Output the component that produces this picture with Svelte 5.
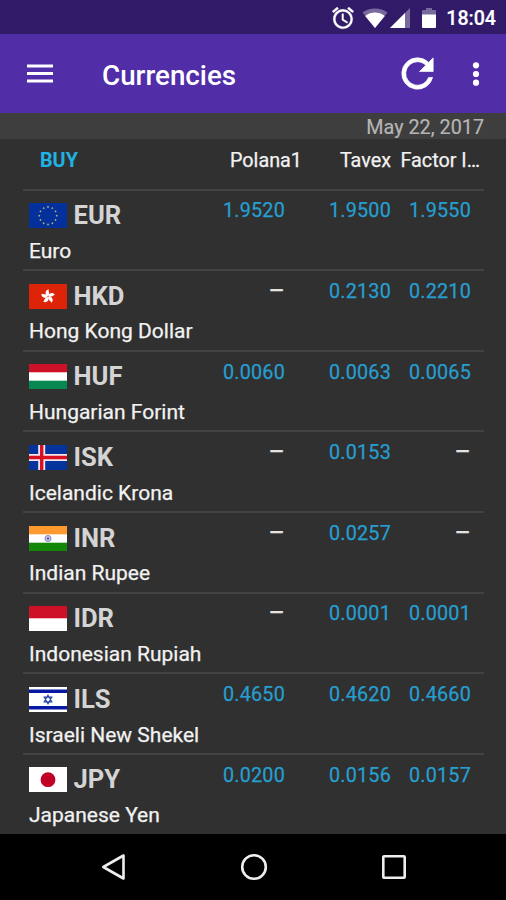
<script lang="ts">
  // Currency list: buy rates per exchange office. A null rate means
  // the office does not trade that currency.

  interface Currency {
    code: string;
    name: string;
    rates: (string | null)[];
  }

  const offices = ['Polana1', 'Tavex', 'Factor I…'];

  const currencies: Currency[] = [
    { code: 'EUR', name: 'Euro', rates: ['1.9520', '1.9500', '1.9550'] },
    { code: 'HKD', name: 'Hong Kong Dollar', rates: [null, '0.2130', '0.2210'] },
    { code: 'HUF', name: 'Hungarian Forint', rates: ['0.0060', '0.0063', '0.0065'] },
    { code: 'ISK', name: 'Icelandic Krona', rates: [null, '0.0153', null] },
    { code: 'INR', name: 'Indian Rupee', rates: [null, '0.0257', null] },
    { code: 'IDR', name: 'Indonesian Rupiah', rates: [null, '0.0001', '0.0001'] },
    { code: 'ILS', name: 'Israeli New Shekel', rates: ['0.4650', '0.4620', '0.4660'] },
    { code: 'JPY', name: 'Japanese Yen', rates: ['0.0200', '0.0156', '0.0157'] },
  ];

  const around = (n: number) => Array.from({ length: n }, (_, i) => (i * 360) / n);
</script>

{#snippet flag(code: string)}
  <svg class="flag" viewBox="0 0 38 25" preserveAspectRatio="none">
    {#if code === 'EUR'}
      <rect width="38" height="25" fill="#03309b" />
      {#each around(12) as deg}
        <circle cx="19" cy="4" r="0.9" fill="#b9b277" transform="rotate({deg} 19 12.7)" />
      {/each}
    {:else if code === 'HKD'}
      <rect width="38" height="25" fill="#de2408" />
      {#each around(5) as deg}
        <path d="M19 12.5C15.6 10.8 15.7 6.4 19.8 5.3C18.7 7 21.8 8.6 19 12.5Z" fill="#fff" transform="rotate({deg} 19 12.5)" />
      {/each}
      <circle cx="19" cy="12.5" r="0.8" fill="#e8604e" />
    {:else if code === 'HUF'}
      <rect width="38" height="25" fill="#fff" />
      <rect width="38" height="8.3" fill="#cd1128" />
      <rect y="16.7" width="38" height="8.3" fill="#078751" />
    {:else if code === 'ISK'}
      <rect width="38" height="25" fill="#04349c" />
      <path d="M0 12.5H38M12.7 0V25" stroke="#f3e6f0" stroke-width="7" />
      <path d="M0 12.5H38M12.7 0V25" stroke="#d8101f" stroke-width="3.4" />
    {:else if code === 'INR'}
      <rect width="38" height="25" fill="#fff" />
      <rect width="38" height="8.3" fill="#ff9930" />
      <rect y="16.7" width="38" height="8.3" fill="#128708" />
      <circle cx="19" cy="12.5" r="3" fill="#d5d5ef" stroke="#8080c0" stroke-width="1" />
      <circle cx="19" cy="12.5" r="1.2" fill="#5555a8" />
    {:else if code === 'IDR'}
      <rect width="38" height="25" fill="#fff" />
      <rect width="38" height="12.3" fill="#ce1126" />
    {:else if code === 'ILS'}
      <rect width="38" height="25" fill="#fff" />
      <path d="M0 4.3H38M0 20.7H38" stroke="#0719a2" stroke-width="3.4" />
      <path d="M19 8.2L22.8 14.8H15.2ZM19 16.8L15.2 10.2H22.8Z" fill="none" stroke="#2746b0" stroke-width="1.2" />
    {:else}
      <rect width="38" height="25" fill="#fff" />
      <circle cx="19" cy="12.7" r="7.4" fill="#c00027" />
    {/if}
  </svg>
{/snippet}

<div class="screen">
  <div class="status">
    <svg class="status__alarm" viewBox="0 0 24 24">
      <path d="M22 5.72l-4.6-3.86-1.29 1.53 4.6 3.86L22 5.72zM7.88 3.39L6.6 1.86 2 5.71l1.29 1.53 4.59-3.85zM12.5 8H11v6l4.75 2.85.75-1.23-4-2.37V8zM12 4c-4.97 0-9 4.03-9 9s4.02 9 9 9a9 9 0 0 0 0-18zm0 16c-3.87 0-7-3.13-7-7s3.13-7 7-7 7 3.13 7 7-3.13 7-7 7z" />
    </svg>
    <svg class="status__wifi" viewBox="0 0 26 20">
      <path class="faded" d="M13 20L0.5 4.6C4 1.8 8.3 0.4 13 0.4S22 1.8 25.5 4.6Z" />
      <path d="M13 20L3.2 7.9C6 5.7 9.4 4.5 13 4.5S20 5.7 22.8 7.9Z" />
    </svg>
    <svg class="status__signal" viewBox="0 0 20 20">
      <path class="faded" d="M0 20L20 0V20Z" />
      <path d="M0 20L15 5V20Z" />
    </svg>
    <svg class="status__battery" viewBox="0 0 14 20">
      <path class="faded" d="M4 0H10V2H13Q14 2 14 3V7H0V3Q0 2 1 2H4Z" />
      <path d="M0 6.5H14V19Q14 20 13 20H1Q0 20 0 19Z" />
    </svg>
    <span class="status__time">18:04</span>
  </div>

  <header class="appbar">
    <svg class="appbar__menu" viewBox="0 0 26 19">
      <path d="M0 0.5H26V3.5H0ZM0 8H26V11H0ZM0 15.5H26V18.5H0Z" />
    </svg>
    <h1 class="appbar__title">Currencies</h1>
    <svg class="appbar__refresh" viewBox="0 0 24 24">
      <path d="M17.65 6.35A7.96 7.96 0 0 0 12 4a8 8 0 1 0 7.73 10h-2.08A6 6 0 1 1 12 6c1.66 0 3.14.69 4.22 1.78L13 11h7V4l-2.35 2.35z" />
    </svg>
    <svg class="appbar__more" viewBox="0 0 8 26">
      <circle cx="4" cy="4.3" r="3.1" />
      <circle cx="4" cy="13" r="3.1" />
      <circle cx="4" cy="21.7" r="3.1" />
    </svg>
  </header>

  <div class="date">May 22, 2017</div>

  <main class="list">
    <div class="head">
      <span class="head__mode">BUY</span>
      {#each offices as office}
        <span class="head__office">{office}</span>
      {/each}
    </div>

    {#each currencies as currency (currency.code)}
      <div class="row">
        <div class="row__currency">
          <div class="row__id">
            {@render flag(currency.code)}
            <span class="row__code">{currency.code}</span>
          </div>
          <div class="row__name">{currency.name}</div>
        </div>
        {#each currency.rates as rate}
          <span class="rate" class:rate--none={rate === null}>{rate ?? '–'}</span>
        {/each}
      </div>
    {/each}
  </main>

  <nav class="nav">
    <svg viewBox="0 0 28 28">
      <path d="M3.3 14L23.5 2.5V25.5Z" />
    </svg>
    <svg viewBox="0 0 28 28">
      <circle cx="14" cy="14" r="11.8" />
    </svg>
    <svg viewBox="0 0 28 28">
      <rect x="3.3" y="3.3" width="21.4" height="21.4" rx="0.8" />
    </svg>
  </nav>
</div>

<style>
  :global(body) {
    margin: 0;
    background: #303030;
  }

  .screen {
    display: flex;
    flex-direction: column;
    width: 506px;
    height: 900px;
    overflow: hidden;
    background: #303030;
    color: #f2f2f2;
    font-family: Roboto, sans-serif;
  }

  svg {
    display: block;
    flex: none;
    fill: #fff;
  }

  .status {
    display: flex;
    align-items: center;
    justify-content: flex-end;
    flex: none;
    box-sizing: border-box;
    height: 34px;
    padding: 2px 10px 0 0;
    background: #311b69;
  }
  .status .faded {
    opacity: 0.35;
  }
  .status__alarm {
    width: 26px;
    height: 26px;
    margin-right: 6px;
    stroke: #fff;
    stroke-width: 0.3;
  }
  .status__wifi {
    width: 26px;
    height: 20px;
    margin-right: 2px;
  }
  .status__signal {
    width: 20px;
    height: 20px;
    margin-right: 12px;
  }
  .status__battery {
    width: 14px;
    height: 20px;
    margin-right: 10px;
  }
  .status__time {
    padding-top: 1px;
    color: #fff;
    font-size: 19.6px;
    font-weight: 500;
    line-height: 24px;
    -webkit-text-stroke: 0.2px;
  }

  .appbar {
    display: flex;
    align-items: center;
    flex: none;
    box-sizing: border-box;
    height: 79px;
    padding: 0 26px 0 27px;
    background: #512da8;
  }
  .appbar__menu {
    width: 26px;
    height: 19px;
  }
  .appbar__title {
    flex: 1;
    margin: 4px 0 0 49px;
    color: #fff;
    font-size: 27.8px;
    font-weight: 500;
    line-height: 32px;
  }
  .appbar__refresh {
    width: 47px;
    height: 47px;
    margin-right: 31px;
    stroke: #fff;
    stroke-width: 0.35;
  }
  .appbar__more {
    width: 8px;
    height: 26px;
  }

  .date {
    flex: none;
    box-sizing: border-box;
    height: 26px;
    padding: 3px 22px 0 0;
    background: #3e3e3e;
    color: #b5b5b5;
    font-size: 19.8px;
    line-height: 24px;
    text-align: right;
    -webkit-text-stroke: 0.2px;
  }

  .list {
    flex: 1;
    padding: 0 22px 0 23px;
    -webkit-text-stroke: 0.25px;
  }

  .head {
    display: grid;
    grid-template-columns: 1fr 99px 89px 89px;
    box-sizing: border-box;
    height: 49.5px;
    padding: 10px 4px 0 17px;
    font-size: 19.8px;
    line-height: 24px;
  }
  .head__mode {
    color: #1fb2e4;
    font-weight: 700;
    -webkit-text-stroke: 0;
  }
  .head__office {
    text-align: right;
    white-space: nowrap;
  }

  .row {
    display: grid;
    grid-template-columns: 1fr 82px 106px 80px;
    box-sizing: border-box;
    height: 80.64px;
    padding: 0 13px 0 6px;
    border-top: 2px solid #424242;
  }
  .row__id {
    display: flex;
    align-items: flex-start;
    gap: 6.5px;
    padding-top: 12.5px;
    height: 25px;
  }
  .flag {
    width: 38px;
    height: 25px;
  }
  .row__code {
    color: #d4d4d4;
    font-size: 25.6px;
    font-weight: 700;
    line-height: 24px;
    -webkit-text-stroke: 0;
  }
  .row__name {
    margin-top: 10.8px;
    font-size: 21px;
    line-height: 24px;
    white-space: nowrap;
  }

  .rate {
    padding-top: 8.8px;
    color: #269fd0;
    font-size: 19.8px;
    letter-spacing: 0.2px;
    line-height: 24px;
    text-align: right;
  }
  .rate--none {
    color: #e4e4e4;
    font-size: 25px;
    line-height: 22px;
    letter-spacing: 0;
  }

  .nav {
    display: flex;
    align-items: center;
    justify-content: space-between;
    flex: none;
    box-sizing: border-box;
    height: 66px;
    padding: 0 98px 0 100px;
    background: #000;
  }
  .nav svg {
    width: 28px;
    height: 28px;
    fill: none;
    stroke: #eee;
    stroke-width: 2.6;
    stroke-linejoin: round;
  }
</style>
